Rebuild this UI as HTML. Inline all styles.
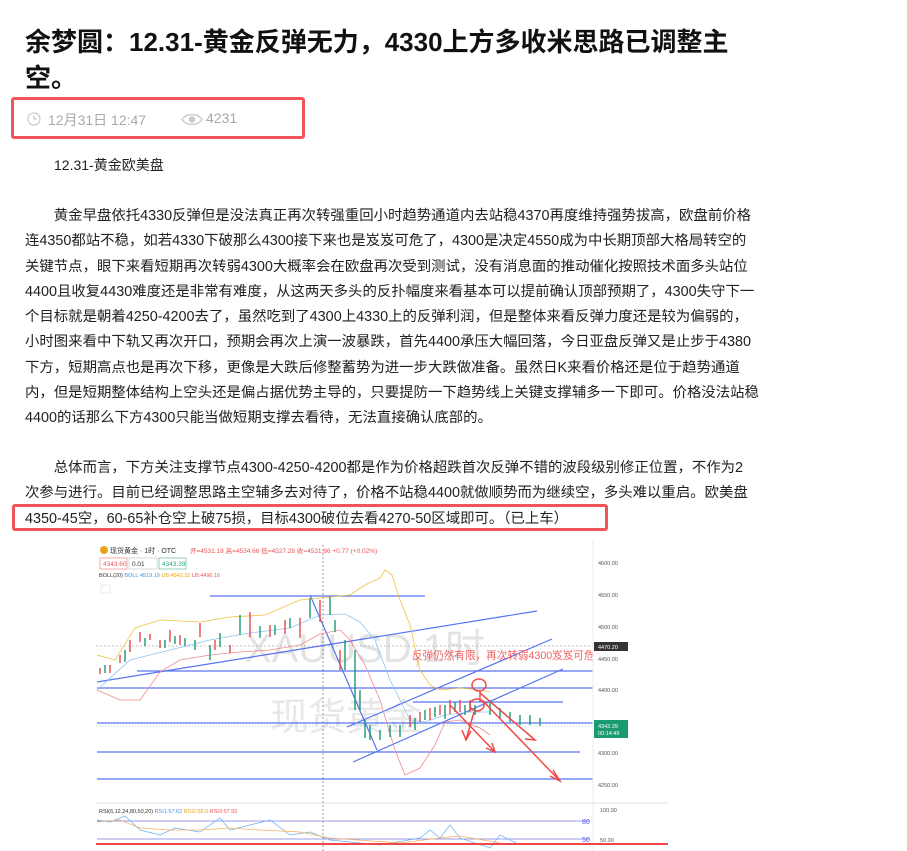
<!DOCTYPE html>
<html><head><meta charset="utf-8">
<style>
*{margin:0;padding:0;box-sizing:border-box}
body{width:907px;height:851px;overflow:hidden;background:#fff;font-family:"Liberation Sans","Noto Sans CJK SC",sans-serif;color:#222;position:relative}
.t{position:absolute;left:25px;top:24px;font-size:26px;font-weight:bold;line-height:36px;color:#111;white-space:nowrap}
.meta{position:absolute;left:11px;top:97px;width:294px;height:42px;border:3px solid #f0555a;border-radius:3px;color:#aaa;font-size:14px}
.meta span{position:absolute;top:10px}
p{position:absolute;left:25px;font-size:14.4px;line-height:25.3px;white-space:nowrap;color:#222}
.box2{position:absolute;left:12px;top:504px;width:596px;height:27px;border:3px solid #f0555a;border-radius:3px}
svg{position:absolute;left:0;top:0}
</style></head><body>
<div class="t">余梦圆：12.31-黄金反弹无力，4330上方多收米思路已调整主<br>空。</div>
<div class="meta">
<svg style="left:13px;top:12px" width="14" height="14" viewBox="0 0 14 14"><circle cx="7" cy="7" r="6" fill="none" stroke="#ccc" stroke-width="1.3"/><path d="M7 3.5V7h3" fill="none" stroke="#ccc" stroke-width="1.3"/></svg>
<span style="left:34px">12月31日 12:47</span>
<svg style="left:167px;top:13px" width="22" height="13" viewBox="0 0 22 13"><path d="M1 6.5C5 0 17 0 21 6.5C17 13 5 13 1 6.5Z" fill="none" stroke="#ccc" stroke-width="1.4"/><circle cx="11" cy="6.5" r="3.3" fill="#ccc"/></svg>
<span style="left:192px">4231</span>
</div>
<p style="top:153px;left:54px;font-size:14px">12.31-黄金欧美盘</p>
<p style="top:204px">　　黄金早盘依托4330反弹但是没法真正再次转强重回小时趋势通道内去站稳4370再度维持强势拔高，欧盘前价格<br>连4350都站不稳，如若4330下破那么4300接下来也是岌岌可危了，4300是决定4550成为中长期顶部大格局转空的<br>关键节点，眼下来看短期再次转弱4300大概率会在欧盘再次受到测试，没有消息面的推动催化按照技术面多头站位<br>4400且收复4430难度还是非常有难度，从这两天多头的反扑幅度来看基本可以提前确认顶部预期了，4300失守下一<br>个目标就是朝着4250-4200去了，虽然吃到了4300上4330上的反弹利润，但是整体来看反弹力度还是较为偏弱的，<br>小时图来看中下轨又再次开口，预期会再次上演一波暴跌，首先4400承压大幅回落，今日亚盘反弹又是止步于4380<br>下方，短期高点也是再次下移，更像是大跌后修整蓄势为进一步大跌做准备。虽然日K来看价格还是位于趋势通道<br>内，但是短期整体结构上空头还是偏占据优势主导的，只要提防一下趋势线上关键支撑辅多一下即可。价格没法站稳<br>4400的话那么下方4300只能当做短期支撑去看待，无法直接确认底部的。</p>
<p style="top:456px">　　总体而言，下方关注支撑节点4300-4250-4200都是作为价格超跌首次反弹不错的波段级别修正位置，不作为2<br>次参与进行。目前已经调整思路主空辅多去对待了，价格不站稳4400就做顺势而为继续空，多头难以重启。欧美盘<br>4350-45空，60-65补仓空上破75损，目标4300破位去看4270-50区域即可。（已上车）</p>
<div class="box2"></div>
<svg width="907" height="851" viewBox="0 0 907 851" style="font-family:'Liberation Sans','Noto Sans CJK SC',sans-serif">
<rect x="96" y="540" width="572" height="311" fill="#fff"/>
<circle cx="104" cy="550" r="4" fill="#e8a317"/>
<text x="110" y="553" font-size="7" fill="#333">现货黄金 · 1时 · OTC</text>
<text x="190" y="553" font-size="6.5" fill="#e55">开=4531.18 高=4534.66 低=4527.28 收=4531.96 +0.77 (+0.02%)</text>
<rect x="100" y="558" width="27" height="11" fill="none" stroke="#e88" stroke-width=".7"/><text x="103" y="566" font-size="6.5" fill="#e55">4343.60</text>
<rect x="129" y="558" width="28" height="11" fill="none" stroke="#ccc" stroke-width=".7"/><text x="132" y="566" font-size="6.5" fill="#333">0.01</text>
<rect x="159" y="558" width="27" height="11" fill="none" stroke="#6b9" stroke-width=".7"/><text x="162" y="566" font-size="6.5" fill="#2a8">4343.39</text>
<text x="99" y="577" font-size="5.5" fill="#333">BOLL(20) <tspan fill="#4a90e2">BOLL:4519.19</tspan> <tspan fill="#e8a317">UB:4542.32</tspan> <tspan fill="#e55">LB:4496.16</tspan></text>
<rect x="101" y="585" width="9" height="8" fill="none" stroke="#ddd" stroke-width=".6"/>
<rect x="622" y="545" width="9" height="10" fill="none" stroke="#ccc" stroke-width=".6"/><rect x="635" y="545" width="9" height="10" fill="none" stroke="#ccc" stroke-width=".6"/><rect x="648" y="545" width="9" height="10" fill="none" stroke="#ccc" stroke-width=".6"/>
<text x="245" y="662" font-size="40" fill="#e3e3e3">XAUUSD,1时</text>
<text x="270" y="730" font-size="38" fill="#e8e8e8">现货黄金</text>
<line x1="323" y1="545" x2="323" y2="851" stroke="#555" stroke-width=".6" stroke-dasharray="2,2"/>
<line x1="96" y1="646" x2="668" y2="646" stroke="#888" stroke-width=".5" stroke-dasharray="2,2"/>
<line x1="96" y1="726" x2="668" y2="726" stroke="#5b9" stroke-width=".5" stroke-dasharray="1,2"/>
<g stroke="#3a5bf0" stroke-width="1.2" fill="none" opacity=".85">
<line x1="210" y1="596" x2="425" y2="596"/><line x1="137" y1="671" x2="594" y2="671"/><line x1="97" y1="688" x2="594" y2="688"/><line x1="97" y1="723" x2="594" y2="723"/><line x1="97" y1="752" x2="580" y2="752"/><line x1="97" y1="779" x2="594" y2="779"/><line x1="413" y1="702" x2="563" y2="702"/>
<line x1="97" y1="682" x2="537" y2="611"/><line x1="347" y1="727" x2="552" y2="639"/><line x1="353" y1="762" x2="563" y2="669"/><line x1="310" y1="595" x2="377" y2="750"/>
</g>
<polyline fill="none" stroke="#f0c040" stroke-width=".8" points="97,655 115,660 135,628 160,620 200,622 230,617 265,615 300,600 330,597 350,595 365,585 380,578 385,570 392,575 400,600 410,625 420,670 430,685 440,690 460,688 480,690 490,692"/>
<polyline fill="none" stroke="#8ec5f0" stroke-width=".8" points="97,690 130,660 170,650 210,640 250,633 290,628 320,615 345,614 360,622 375,640 390,680 400,700 410,720 425,722 445,715 470,712 490,712"/>
<polyline fill="none" stroke="#f28a8a" stroke-width=".8" points="97,690 120,700 140,700 160,672 180,660 210,655 240,652 270,650 300,645 320,634 340,630 350,640 365,665 380,700 395,750 405,775 420,768 435,745 445,722 460,720 480,728 490,735"/>
<g stroke-width="1.4">
<path d="M100 668v6M110 665v8M120 655v8M130 640v12M140 632v10M150 634v6M160 640v8M170 630v12M180 635v10M200 623v14M215 640v10M230 645v8M250 612v25M270 625v12M285 620v14M300 618v20M320 600v22M340 650v20" stroke="#e24a4a"/>
<path d="M105 665v8M125 650v12M145 638v8M165 640v8M175 636v8M185 638v8M195 640v10M210 645v15M220 633v14M240 615v20M260 626v12M275 625v10M290 618v10M310 598v20M330 597v18M335 620v12M345 640v30M355 650v60M360 690v20M365 720v18M370 725v15M380 730v10M390 725v12M400 725v12" stroke="#1a9a70"/>
<path d="M410 715v12M420 712v10M430 708v12M440 705v10M450 700v14M460 700v12M470 700v12M480 690v12" stroke="#e24a4a"/>
<path d="M415 718v12M425 710v10M435 707v10M445 705v14M455 702v10M465 705v10M475 705v10M490 700v15M500 708v10M510 712v10M520 715v10M530 715v10M540 718v8" stroke="#1a9a70"/>
</g>
<text x="412" y="659" font-size="10.6" fill="#f26060">反弹仍然有限，再次转弱4300岌岌可危</text>
<g stroke="#f04848" stroke-width="1.5" fill="none">
<ellipse cx="479" cy="685" rx="7" ry="6"/><ellipse cx="477" cy="705" rx="7" ry="6"/>
<path d="M480 693L535 740M527 733L535 740L525 739"/>
<path d="M482 700L560 781M553 770L560 781L550 776"/>
<path d="M450 705L495 752M486 748L495 752L492 743"/>
<path d="M474 712L466 740M462 730L466 740L471 731"/>
</g>
<rect x="593" y="540" width="75" height="263" fill="#fff"/>
<line x1="593" y1="540" x2="593" y2="851" stroke="#eee"/>
<g font-size="5.5" fill="#555">
<text x="598" y="565">4600.00</text><text x="598" y="597">4550.00</text><text x="598" y="629">4500.00</text><text x="598" y="661">4450.00</text><text x="598" y="692">4400.00</text><text x="598" y="755">4300.00</text><text x="598" y="787">4250.00</text>
</g>
<rect x="594" y="642" width="34" height="9" fill="#333"/><text x="598" y="649" font-size="5.5" fill="#fff">4470.20</text>
<rect x="594" y="720" width="34" height="18" fill="#1a9a70"/><text x="598" y="728" font-size="5.5" fill="#fff">4343.39</text><text x="598" y="735" font-size="5.5" fill="#fff">00:14:49</text>
<line x1="96" y1="803" x2="668" y2="803" stroke="#ddd"/>
<text x="99" y="813" font-size="5.5" fill="#333">RSI(6,12,24,80,50,20) <tspan fill="#4a90e2">RSI1:57.62</tspan> <tspan fill="#e8a317">RSI2:58.0</tspan> <tspan fill="#e55">RSI3:57.93</tspan></text>
<text x="600" y="812" font-size="5.5" fill="#555">100.00</text>
<line x1="97" y1="821" x2="590" y2="821" stroke="#7a7ae8" stroke-width=".8"/><text x="582" y="824" font-size="7" fill="#55d">80</text>
<line x1="97" y1="839" x2="590" y2="839" stroke="#7a7ae8" stroke-width=".8"/><text x="582" y="842" font-size="7" fill="#55d">50</text>
<text x="600" y="842" font-size="5.5" fill="#555">50.00</text>
<polyline fill="none" stroke="#6ab0f0" stroke-width=".7" points="97,820 110,822 125,816 140,830 160,835 175,828 200,832 220,818 230,830 250,825 270,820 290,835 310,832 330,840 380,845 420,838 430,830 440,838 450,825 460,838 490,848 500,835 520,845"/>
<polyline fill="none" stroke="#f5b060" stroke-width=".7" points="97,822 120,820 140,828 170,830 200,830 230,828 260,830 300,832 330,838 400,843 440,838 460,836 500,843"/>
<line x1="96" y1="844" x2="668" y2="844" stroke="#f04848" stroke-width="2"/>
</svg>
</body></html>
